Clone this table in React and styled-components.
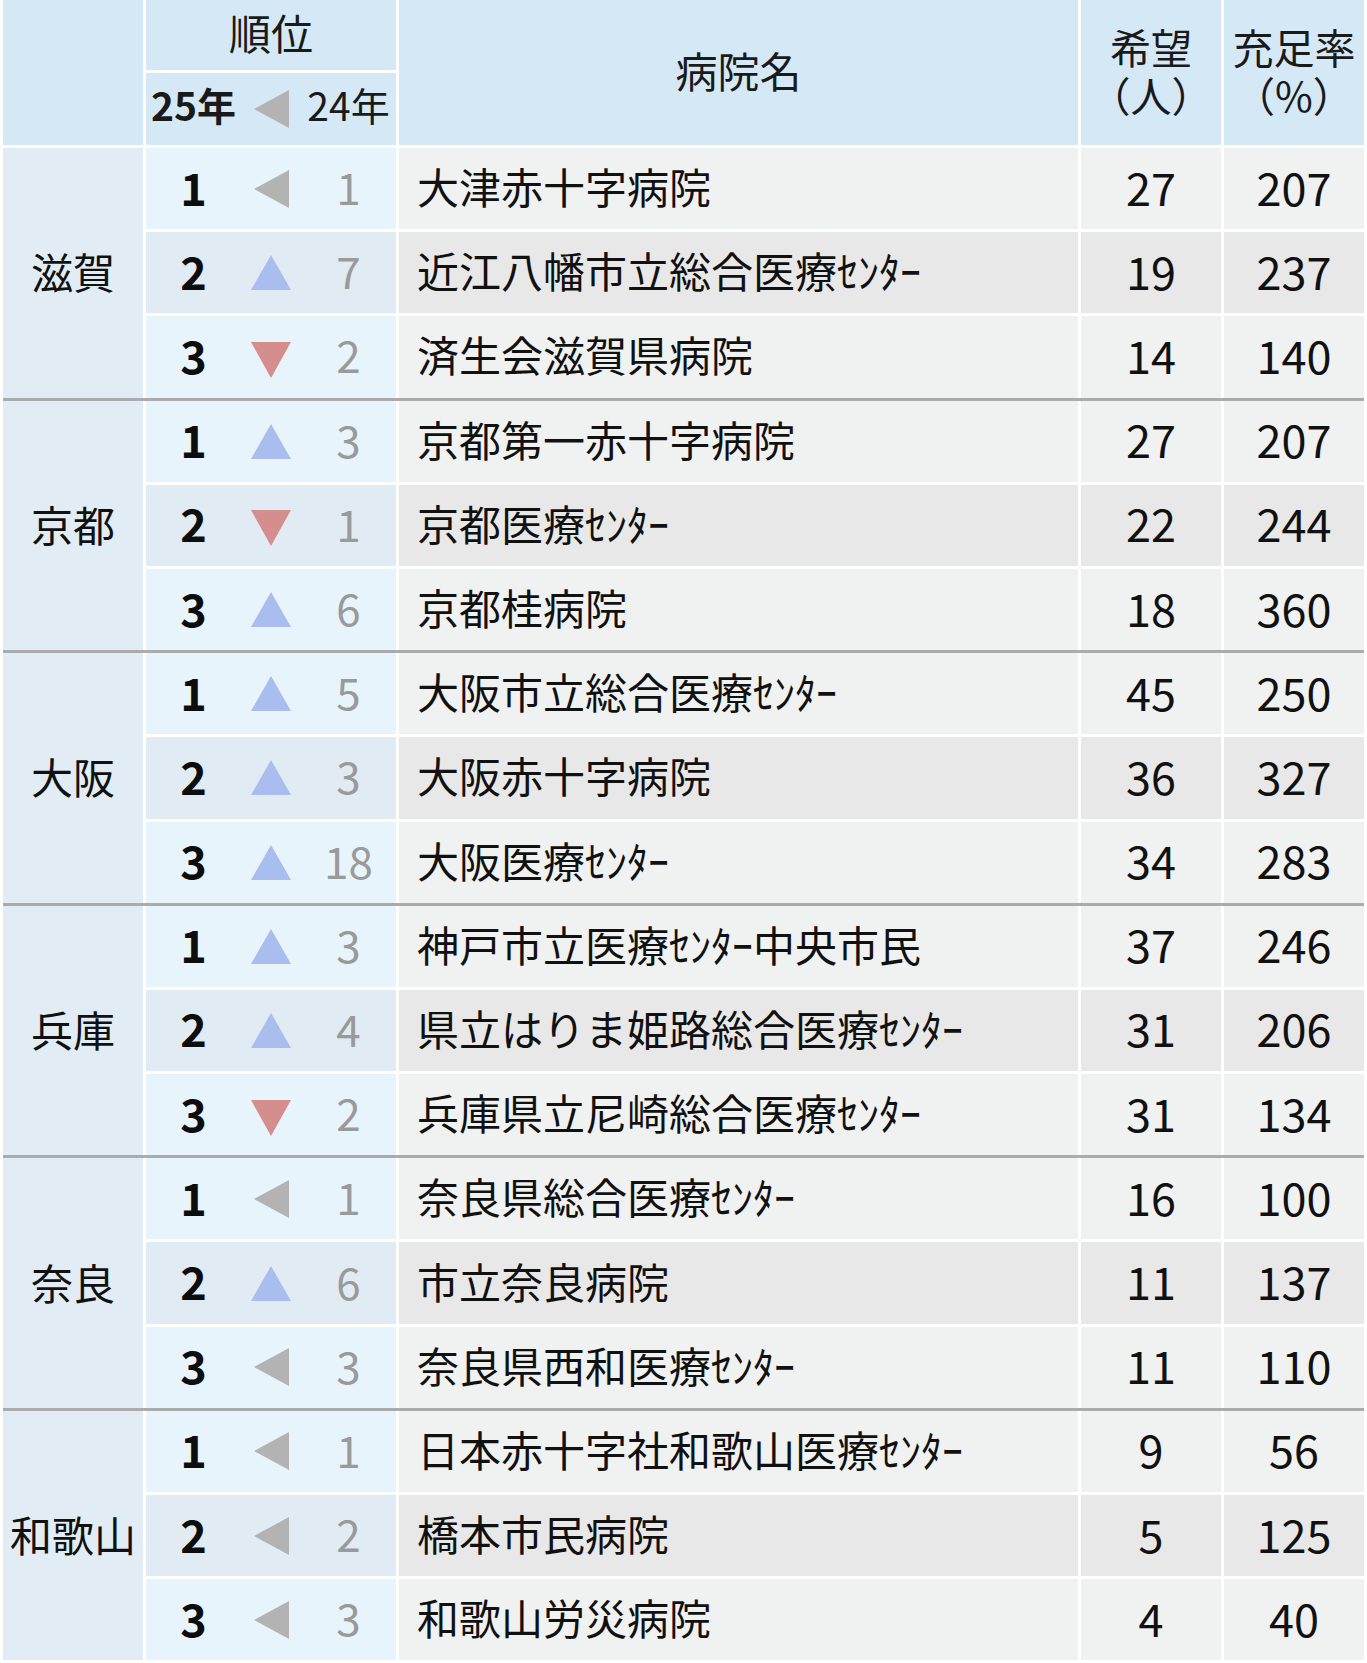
import React from "react"
import styled, { createGlobalStyle } from "styled-components"

const GlobalStyle = createGlobalStyle`
  html, body {
    margin: 0;
    padding: 0;
    background: #fff;
  }
  body {
    font-family: "Noto Sans CJK JP", "Noto Sans", sans-serif;
    color: #111;
  }
`

const groups = [
  {
    pref: "滋賀",
    rows: [
      { rank: 1, move: "same", prev: 1, name: "大津赤十字病院", hope: 27, rate: 207 },
      { rank: 2, move: "up", prev: 7, name: "近江八幡市立総合医療ｾﾝﾀｰ", hope: 19, rate: 237 },
      { rank: 3, move: "down", prev: 2, name: "済生会滋賀県病院", hope: 14, rate: 140 },
    ],
  },
  {
    pref: "京都",
    rows: [
      { rank: 1, move: "up", prev: 3, name: "京都第一赤十字病院", hope: 27, rate: 207 },
      { rank: 2, move: "down", prev: 1, name: "京都医療ｾﾝﾀｰ", hope: 22, rate: 244 },
      { rank: 3, move: "up", prev: 6, name: "京都桂病院", hope: 18, rate: 360 },
    ],
  },
  {
    pref: "大阪",
    rows: [
      { rank: 1, move: "up", prev: 5, name: "大阪市立総合医療ｾﾝﾀｰ", hope: 45, rate: 250 },
      { rank: 2, move: "up", prev: 3, name: "大阪赤十字病院", hope: 36, rate: 327 },
      { rank: 3, move: "up", prev: 18, name: "大阪医療ｾﾝﾀｰ", hope: 34, rate: 283 },
    ],
  },
  {
    pref: "兵庫",
    rows: [
      { rank: 1, move: "up", prev: 3, name: "神戸市立医療ｾﾝﾀｰ中央市民", hope: 37, rate: 246 },
      { rank: 2, move: "up", prev: 4, name: "県立はりま姫路総合医療ｾﾝﾀｰ", hope: 31, rate: 206 },
      { rank: 3, move: "down", prev: 2, name: "兵庫県立尼崎総合医療ｾﾝﾀｰ", hope: 31, rate: 134 },
    ],
  },
  {
    pref: "奈良",
    rows: [
      { rank: 1, move: "same", prev: 1, name: "奈良県総合医療ｾﾝﾀｰ", hope: 16, rate: 100 },
      { rank: 2, move: "up", prev: 6, name: "市立奈良病院", hope: 11, rate: 137 },
      { rank: 3, move: "same", prev: 3, name: "奈良県西和医療ｾﾝﾀｰ", hope: 11, rate: 110 },
    ],
  },
  {
    pref: "和歌山",
    rows: [
      { rank: 1, move: "same", prev: 1, name: "日本赤十字社和歌山医療ｾﾝﾀｰ", hope: 9, rate: 56 },
      { rank: 2, move: "same", prev: 2, name: "橋本市民病院", hope: 5, rate: 125 },
      { rank: 3, move: "same", prev: 3, name: "和歌山労災病院", hope: 4, rate: 40 },
    ],
  },
]

// triangle marks drawn as svg
const Mark = ({ move }) => {
  if (move === "up")
    return (
      <svg width="40" height="35" viewBox="0 0 40 35">
        <polygon points="20,0 40,35 0,35" fill="#a9bdee" />
      </svg>
    )
  if (move === "down")
    return (
      <svg width="40" height="36" viewBox="0 0 40 36" style={{ marginTop: 6 }}>
        <polygon points="0,0 40,0 20,36" fill="#d58e8e" />
      </svg>
    )
  return (
    <svg width="35" height="38" viewBox="0 0 35 38">
      <polygon points="0,19 35,0 35,38" fill="#b3b3b3" />
    </svg>
  )
}

const App = () => (
  <>
    <GlobalStyle />
    <Page>
      <HeadRow>
        <HeadCell />
        <RankHead>
          <RankTitle>順位</RankTitle>
          <RankSub>
            <SubYear $bold>25年</SubYear>
            <SubMark>
              <Mark move="same" />
            </SubMark>
            <SubYear>24年</SubYear>
          </RankSub>
        </RankHead>
        <HeadCell>病院名</HeadCell>
        <HeadCell>
          <HeadLines>
            希望
            <br />
            （人）
          </HeadLines>
        </HeadCell>
        <HeadCell>
          <HeadLines>
            充足率
            <br />
            （%）
          </HeadLines>
        </HeadCell>
      </HeadRow>

      {groups.map((g, gi) => (
        <Group key={g.pref} $first={gi === 0}>
          <PrefCell>{g.pref}</PrefCell>
          <Rows>
            {g.rows.map((r, ri) => (
              <Row key={r.rank}>
                <RankCell $even={ri === 1}>
                  <RankNum>{r.rank}</RankNum>
                  <MarkBox>
                    <Mark move={r.move} />
                  </MarkBox>
                  <PrevNum>{r.prev}</PrevNum>
                </RankCell>
                <NameCell $even={ri === 1}>{r.name}</NameCell>
                <NumCell $even={ri === 1}>{r.hope}</NumCell>
                <NumCell $even={ri === 1}>{r.rate}</NumCell>
              </Row>
            ))}
          </Rows>
        </Group>
      ))}
    </Page>
  </>
)

const Page = styled.div`
  width: 1367px;
  box-sizing: border-box;
  padding: 0 3px 3px 3px;
  background: #fff;
`

const HeadRow = styled.div`
  display: grid;
  grid-template-columns: 140px 250px 679px 140px 140px;
  column-gap: 3px;
  height: 145px;
`

const HeadCell = styled.div`
  background: #d5e8f5;
  display: flex;
  align-items: center;
  justify-content: center;
  box-sizing: border-box;
  padding-bottom: 6px;
  font-size: 42px;
  line-height: 1;
  color: #1a1a1a;
`

const HeadLines = styled.div`
  text-align: center;
  font-size: 41px;
  line-height: 48px;
  white-space: nowrap;
`

const RankHead = styled.div`
  display: flex;
  flex-direction: column;
  gap: 3px;
`

const RankTitle = styled.div`
  height: 70px;
  box-sizing: border-box;
  padding-bottom: 6px;
  background: #d5e8f5;
  display: flex;
  align-items: center;
  justify-content: center;
  font-size: 42px;
  line-height: 1;
  color: #1a1a1a;
`

const RankSub = styled.div`
  flex: 1;
  background: #d5e8f5;
  display: grid;
  grid-template-columns: 95px 60px 95px;
  align-items: center;
`

const SubYear = styled.div`
  text-align: center;
  font-size: 39px;
  line-height: 1;
  font-weight: ${p => (p.$bold ? 700 : 400)};
  color: #1a1a1a;
  padding-bottom: 9px;
`

const SubMark = styled.div`
  display: flex;
  justify-content: center;
  align-items: center;
`

const Group = styled.div`
  display: grid;
  grid-template-columns: 140px 1fr;
  column-gap: 3px;
  border-top: 3px solid ${p => (p.$first ? "#fff" : "#ababab")};
`

const PrefCell = styled.div`
  background: #e2ecf4;
  display: flex;
  align-items: center;
  justify-content: center;
  box-sizing: border-box;
  padding-bottom: 3px;
  font-size: 42px;
  line-height: 1;
  white-space: nowrap;
  color: #111;
`

const Rows = styled.div`
  display: flex;
  flex-direction: column;
  gap: 3px;
`

const Row = styled.div`
  display: grid;
  grid-template-columns: 250px 679px 140px 140px;
  column-gap: 3px;
  height: 81.2px;
`

const RankCell = styled.div`
  background: ${p => (p.$even ? "#e1ebf3" : "#e8f4fc")};
  display: grid;
  grid-template-columns: 95px 60px 95px;
  align-items: center;
`

const RankNum = styled.div`
  text-align: center;
  font-size: 45px;
  font-weight: 700;
  line-height: 1;
  padding-bottom: 5px;
  color: #0d0d0d;
`

const MarkBox = styled.div`
  display: flex;
  justify-content: center;
  align-items: center;
`

const PrevNum = styled.div`
  text-align: center;
  font-size: 44px;
  line-height: 1;
  padding-bottom: 5px;
  color: #9a9a9a;
`

const NameCell = styled.div`
  background: ${p => (p.$even ? "#e8e8e8" : "#f0f1f1")};
  display: flex;
  align-items: center;
  box-sizing: border-box;
  padding: 0 0 5px 18px;
  font-size: 42px;
  line-height: 1;
  white-space: nowrap;
  color: #111;
`

const NumCell = styled.div`
  background: ${p => (p.$even ? "#e8e8e8" : "#f0f1f1")};
  display: flex;
  align-items: center;
  justify-content: center;
  box-sizing: border-box;
  padding-bottom: 5px;
  font-size: 45px;
  line-height: 1;
  color: #111;
`

export default App
